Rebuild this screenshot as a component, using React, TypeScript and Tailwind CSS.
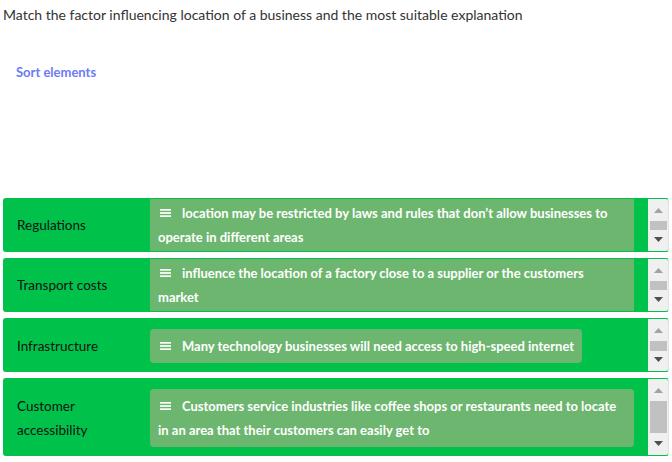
import React from "react";

type Row = {
  label: string;
  text: string;
  height: number;
  offset: number;
  thumb: number;
  wrapCard: boolean;
};

const rows: Row[] = [
  {
    label: "Regulations",
    text: "location may be restricted by laws and rules that don\u2019t allow businesses to operate in different areas",
    height: 54,
    offset: 13,
    thumb: 9,
    wrapCard: true,
  },
  {
    label: "Transport costs",
    text: "influence the location of a factory close to a supplier or the customers market",
    height: 54,
    offset: 13,
    thumb: 9,
    wrapCard: true,
  },
  {
    label: "Infrastructure",
    text: "Many technology businesses will need access to high-speed internet",
    height: 54,
    offset: 0,
    thumb: 10,
    wrapCard: false,
  },
  {
    label: "Customer accessibility",
    text: "Customers service industries like coffee shops or restaurants need to locate in an area that their customers can easily get to",
    height: 78,
    offset: 0,
    thumb: 32,
    wrapCard: true,
  },
];

function Bars() {
  return (
    <svg width="11" height="8" viewBox="0 0 11 8" className="inline-block align-[1px] ml-[2px] mr-[11px]">
      <rect x="0" y="0" width="11" height="1.7" fill="#ffffff" />
      <rect x="0" y="3.15" width="11" height="1.7" fill="#ffffff" />
      <rect x="0" y="6.3" width="11" height="1.7" fill="#ffffff" />
    </svg>
  );
}

function ScrollBar({ thumb }: { thumb: number }) {
  return (
    <div className="w-[20px] shrink-0 bg-[#f0f0f0] flex flex-col items-center pt-[9px] pb-[9px]">
      <svg width="9" height="5" viewBox="0 0 9 5">
        <polygon points="4.5,0 9,5 0,5" fill="#a3a3a3" />
      </svg>
      <div className="mt-[8px] w-[17px] ml-[1px] bg-[#c1c1c1]" style={{ height: thumb }} />
      <div className="flex-1" />
      <svg width="9" height="5" viewBox="0 0 9 5">
        <polygon points="0,0 9,0 4.5,5" fill="#505050" />
      </svg>
    </div>
  );
}

export default function App() {
  return (
    <div className="w-[672px] h-[462px] bg-white overflow-hidden font-['Lato','Noto_Sans',sans-serif]">
      <p className="pl-[3px] pt-[6px] text-[14px] leading-[18px] text-[#333333]">
        Match the factor influencing location of a business and the most suitable explanation
      </p>
      <p className="pl-[16px] mt-[39px] text-[13px] leading-[18px] font-bold text-[#6a7cf6]">
        Sort elements
      </p>
      <div className="mt-[117px] px-[3px] flex flex-col gap-[6px]">
        {rows.map((r) => (
          <div
            key={r.label}
            className="flex overflow-hidden rounded-[3px] border border-[#00c24b] border-r-[#e2e2e2] bg-[#00c24b]"
            style={{ height: r.height }}
          >
            <div className="flex-1 overflow-hidden">
              <div className="flex items-center py-[10px]" style={{ marginTop: -r.offset }}>
                <div className="w-[146px] shrink-0 pl-[13px] pr-[8px] text-[13.5px] leading-[24px] text-[#111111]">
                  {r.label}
                </div>
                <div className="flex-1 pr-[14px]">
                  <div
                    className={
                      (r.wrapCard ? "block" : "inline-block") +
                      " rounded-[4px] bg-[#6db66f] px-[8px] py-[5px] text-[13px] leading-[24px] font-bold text-white"
                    }
                  >
                    <Bars />
                    {r.text}
                  </div>
                </div>
              </div>
            </div>
            <ScrollBar thumb={r.thumb} />
          </div>
        ))}
      </div>
    </div>
  );
}
